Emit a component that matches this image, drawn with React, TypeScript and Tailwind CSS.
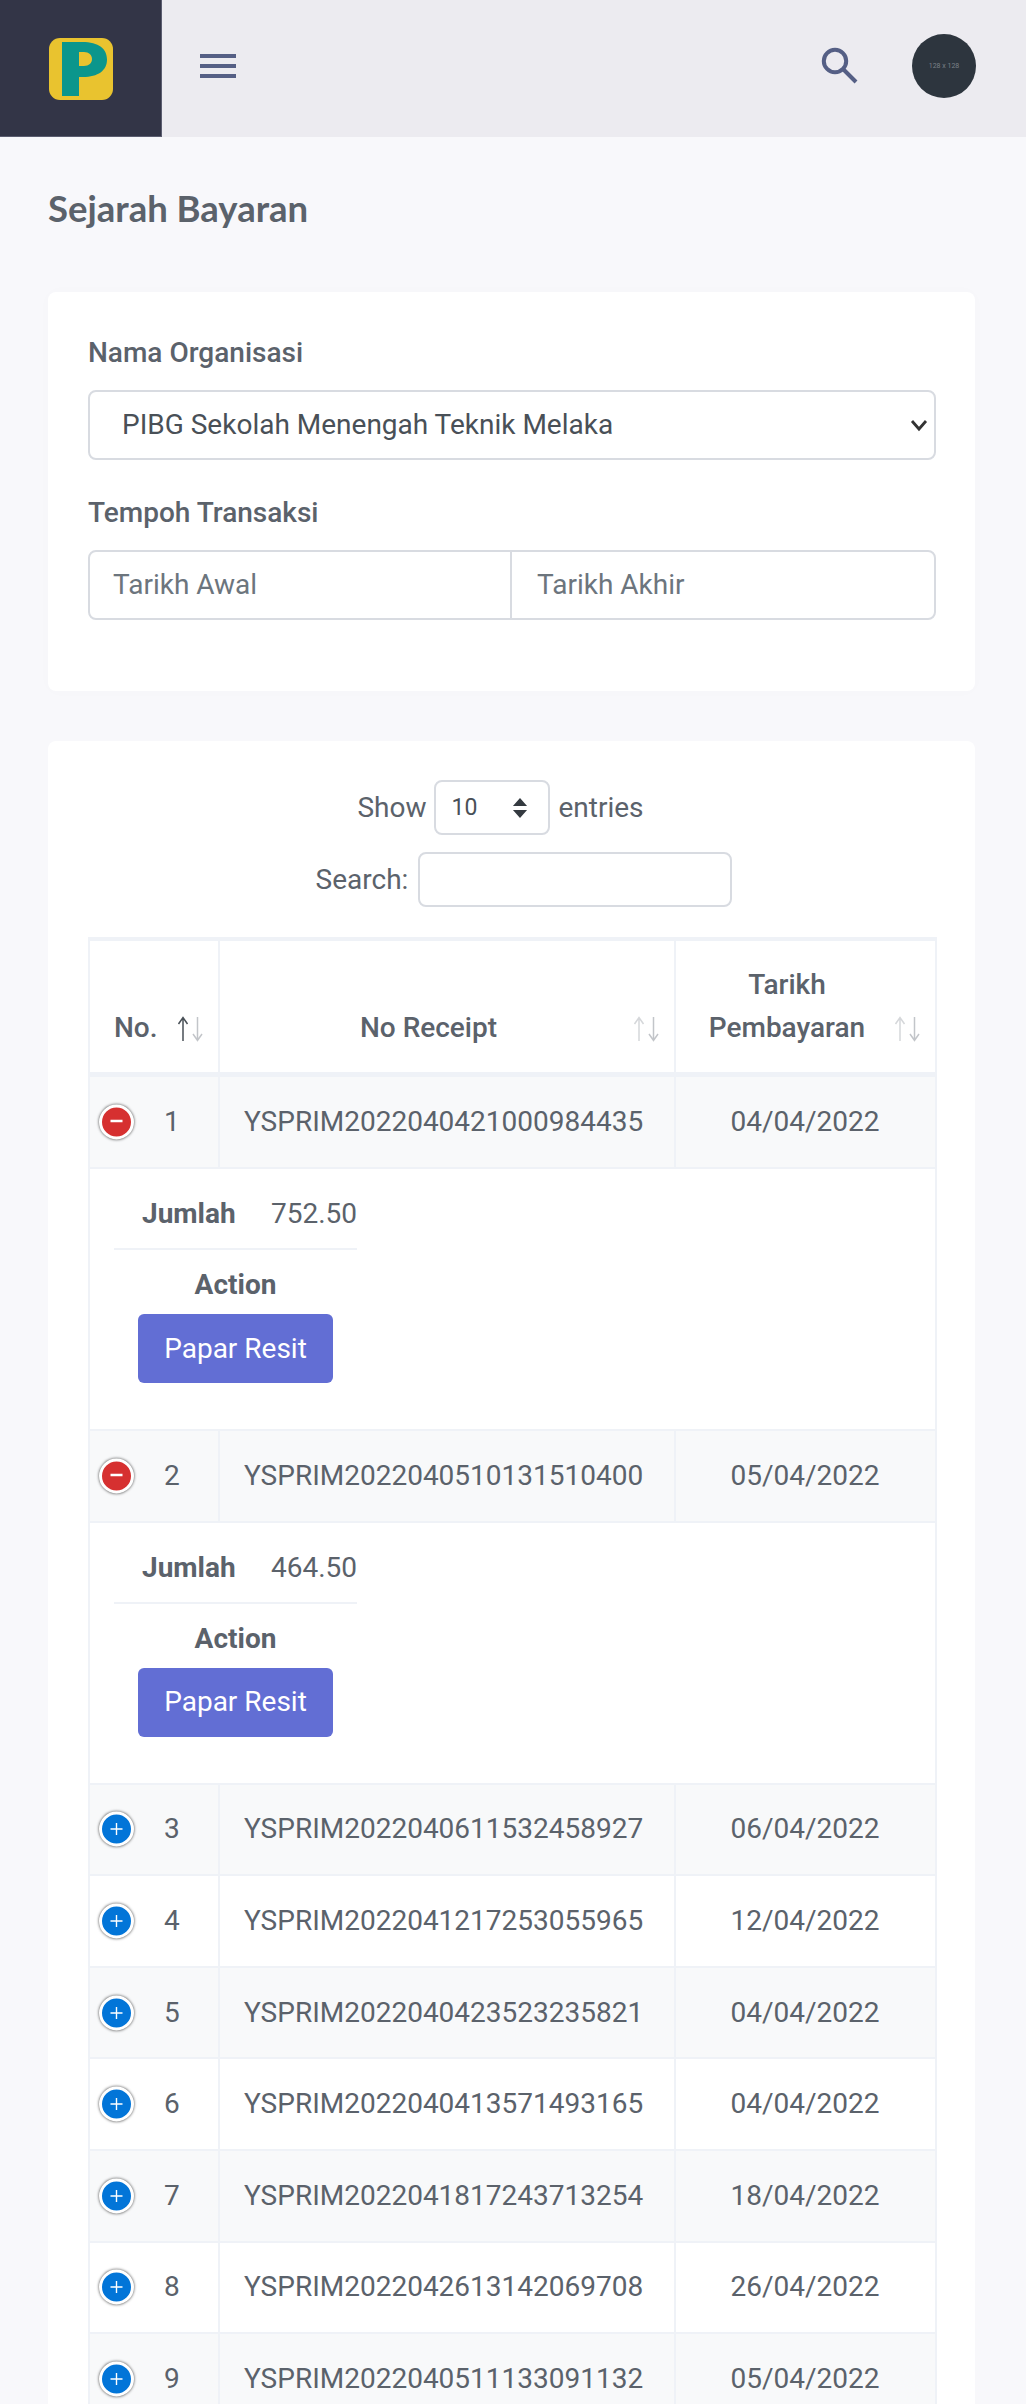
import React from "react";

const rows: [number, string, string, boolean, string?][] = [
  [1, "YSPRIM2022040421000984435", "04/04/2022", true, "752.50"],
  [2, "YSPRIM2022040510131510400", "05/04/2022", true, "464.50"],
  [3, "YSPRIM2022040611532458927", "06/04/2022", false],
  [4, "YSPRIM2022041217253055965", "12/04/2022", false],
  [5, "YSPRIM2022040423523235821", "04/04/2022", false],
  [6, "YSPRIM2022040413571493165", "04/04/2022", false],
  [7, "YSPRIM2022041817243713254", "18/04/2022", false],
  [8, "YSPRIM2022042613142069708", "26/04/2022", false],
  [9, "YSPRIM2022040511133091132", "05/04/2022", false],
];

function SortIcon({ active }: { active?: boolean }) {
  return (
    <svg width="27" height="26" viewBox="0 0 27 26" className="absolute right-[14px] bottom-[30px]">
      <g fill="none" strokeWidth="1.5">
        <path d="M6 25V2M1.5 8L6 1.5 10.5 8" stroke={active ? "#495057" : "#d5d7da"} />
        <path d="M20.5 1v23M16 18l4.5 6.5L25 18" stroke="#c2c5c9" />
      </g>
    </svg>
  );
}

function Toggle({ open }: { open: boolean }) {
  return (
    <span className={`absolute left-[9px] top-1/2 -translate-y-1/2 w-[35px] h-[35px] rounded-full border-[3px] border-white shadow-[0_0_3px_#444] flex items-center justify-center ${open ? "bg-[#d63030]" : "bg-[#0275d8]"}`}>
      <svg width="15" height="15" viewBox="0 0 15 15">
        <path d={open ? "M1.5 6.5h12" : "M1.5 7.5h12M7.5 1.5v12"} stroke="white" strokeWidth={open ? 2.4 : 1.4} />
      </svg>
    </span>
  );
}

export default function App() {
  return (
    <div className="w-[1026px] h-[2404px] overflow-hidden bg-[#f8f8fb] text-[#5b626b] font-['Roboto',sans-serif] text-[28px]">
      <header className="h-[137px] flex bg-[#ecebf0]">
        <div className="w-[162px] bg-[#333547] border-r border-b border-[#5b5d70] flex items-center justify-center">
          <svg width="64" height="62" viewBox="0 0 64 62" className="mt-[1px]">
            <rect width="64" height="62" rx="11" fill="#e9c32f" />
            <path fillRule="evenodd" d="M13 4h20c17 0 25 7 25 17.5 0 11-9 17.5-24 17.5h-4v19H13zM30 14v14h5c5 0 8-3 8-7s-3-7-8-7z" fill="#0b968c" />
          </svg>
        </div>
        <div className="flex-1 flex items-center pl-[38px] pr-[50px]">
          <div className="w-[36px] flex flex-col gap-[6px] mb-[5px]">
            <span className="h-[4px] bg-[#555f85]" />
            <span className="h-[4px] bg-[#555f85]" />
            <span className="h-[4px] bg-[#555f85]" />
          </div>
          <svg width="38" height="38" viewBox="0 0 38 38" className="ml-auto mr-[54px] mb-[7px]">
            <circle cx="15" cy="15" r="11.2" fill="none" stroke="#555f85" strokeWidth="4" />
            <path d="M23.5 23.5L36 36" stroke="#555f85" strokeWidth="4" />
          </svg>
          <div className="w-[64px] h-[64px] mb-[5px] rounded-full bg-[#2d353e] flex items-center justify-center text-[7px] text-[#7b8188]">128 x 128</div>
        </div>
      </header>

      <main className="pl-[48px] pr-[51px]">
        <h1 className="pt-[50px] m-0 h-[155px] font-['Lato',sans-serif] font-bold text-[36.5px] leading-[42px] text-[#5b626b]">Sejarah Bayaran</h1>

        <section className="bg-white rounded-[8px] h-[399px] pl-[40px] pr-[39px] pt-[42px] shadow-[0_0_16px_rgba(0,0,0,0.015)]">
          <div className="font-medium leading-[38px] h-[56px]">Nama Organisasi</div>
          <div className="h-[70px] border-2 border-[#d8dbe1] rounded-[8px] flex items-center pl-[32px] pr-[5px] text-[#495057]">
            <span className="flex-1">PIBG Sekolah Menengah Teknik Melaka</span>
            <svg width="20" height="16" viewBox="0 0 20 16"><path d="M3 4l7 8 7-8" fill="none" stroke="#333" strokeWidth="2.8" /></svg>
          </div>
          <div className="font-medium leading-[38px] h-[56px] mt-[34px]">Tempoh Transaksi</div>
          <div className="h-[70px] border-2 border-[#d8dbe1] rounded-[8px] flex items-center text-[#6c757d]">
            <span className="w-[422px] h-full flex items-center pl-[23px] border-r-2 border-[#d8dbe1]">Tarikh Awal</span>
            <span className="pl-[25px]">Tarikh Akhir</span>
          </div>
        </section>

        <section className="bg-white rounded-t-[8px] mt-[50px] px-[40px] pt-[39px]">
          <div className="flex items-center justify-center gap-[8px] h-[55px] pr-[22px]">
            <span>Show</span>
            <div className="w-[116px] h-[55px] border-2 border-[#d8dbe1] rounded-[8px] flex items-center justify-between pl-[15px] pr-[20px] text-[23px] text-[#495057]">
              <span className="pt-[2px]">10</span>
              <svg width="16" height="20" viewBox="0 0 17 21"><path d="M8.5 0l7.5 8.5H1zM8.5 21L1 12.5h15z" fill="#343a40" /></svg>
            </div>
            <span>entries</span>
          </div>
          <div className="flex items-center justify-center gap-[10px] h-[55px] mt-[17px] pl-[25px]">
            <span>Search:</span>
            <div className="w-[314px] h-[55px] border-2 border-[#d8dbe1] rounded-[8px]" />
          </div>

          <table className="mt-[30px] w-[847px] table-fixed border-collapse">
            <colgroup>
              <col className="w-[130px]" />
              <col className="w-[456px]" />
              <col className="w-[261px]" />
            </colgroup>
            <thead>
              <tr className="h-[135px]">
                <th className="relative border-2 border-t-[4px] border-b-[5px] border-[#eff2f7] font-medium text-left pl-[24px] align-bottom pb-[25px] leading-[38px]">No.<SortIcon active /></th>
                <th className="relative border-2 border-t-[4px] border-b-[5px] border-[#eff2f7] font-medium align-bottom pb-[25px] pr-[37px] leading-[38px]">No Receipt<SortIcon /></th>
                <th className="relative border-2 border-t-[4px] border-b-[5px] border-[#eff2f7] font-medium align-bottom pb-[23px] pr-[37px] leading-[43px]">Tarikh<br />Pembayaran<SortIcon /></th>
              </tr>
            </thead>
            <tbody>
              {rows.map(([n, id, date, open, amt], i) => (
                <React.Fragment key={n}>
                  <tr className={`${i === 0 ? "h-[94px]" : "h-[91.6px]"} ${i % 2 === 0 || i === 1 ? "bg-[#f8f9fa]" : "bg-white"}`}>
                    <td className="relative border-2 border-[#eff2f7] pl-[74px]"><Toggle open={open} />{n}</td>
                    <td className="border-2 border-[#eff2f7] pl-[24px] whitespace-nowrap">{id}</td>
                    <td className="border-2 border-[#eff2f7] text-center pr-[1px]">{date}</td>
                  </tr>
                  {open && (
                    <tr className="h-[262px] bg-white">
                      <td colSpan={3} className="border-2 border-[#eff2f7] align-top p-0">
                        <div className="w-[243px] ml-[24px] pt-[26px]">
                          <div className="flex items-center h-[38px] pl-[28px] justify-between">
                            <b className="font-bold">Jumlah</b>
                            <span>{amt}</span>
                          </div>
                          <div className="h-[17px] border-b-2 border-[#eff2f7]" />
                          <div className="text-center font-bold leading-[38px] mt-[16px]">Action</div>
                          <div className="w-[195px] h-[69px] mt-[10px] mx-auto bg-[#626ed4] rounded-[6px] text-white flex items-center justify-center">Papar Resit</div>
                        </div>
                      </td>
                    </tr>
                  )}
                </React.Fragment>
              ))}
            </tbody>
          </table>
        </section>
      </main>
    </div>
  );
}
